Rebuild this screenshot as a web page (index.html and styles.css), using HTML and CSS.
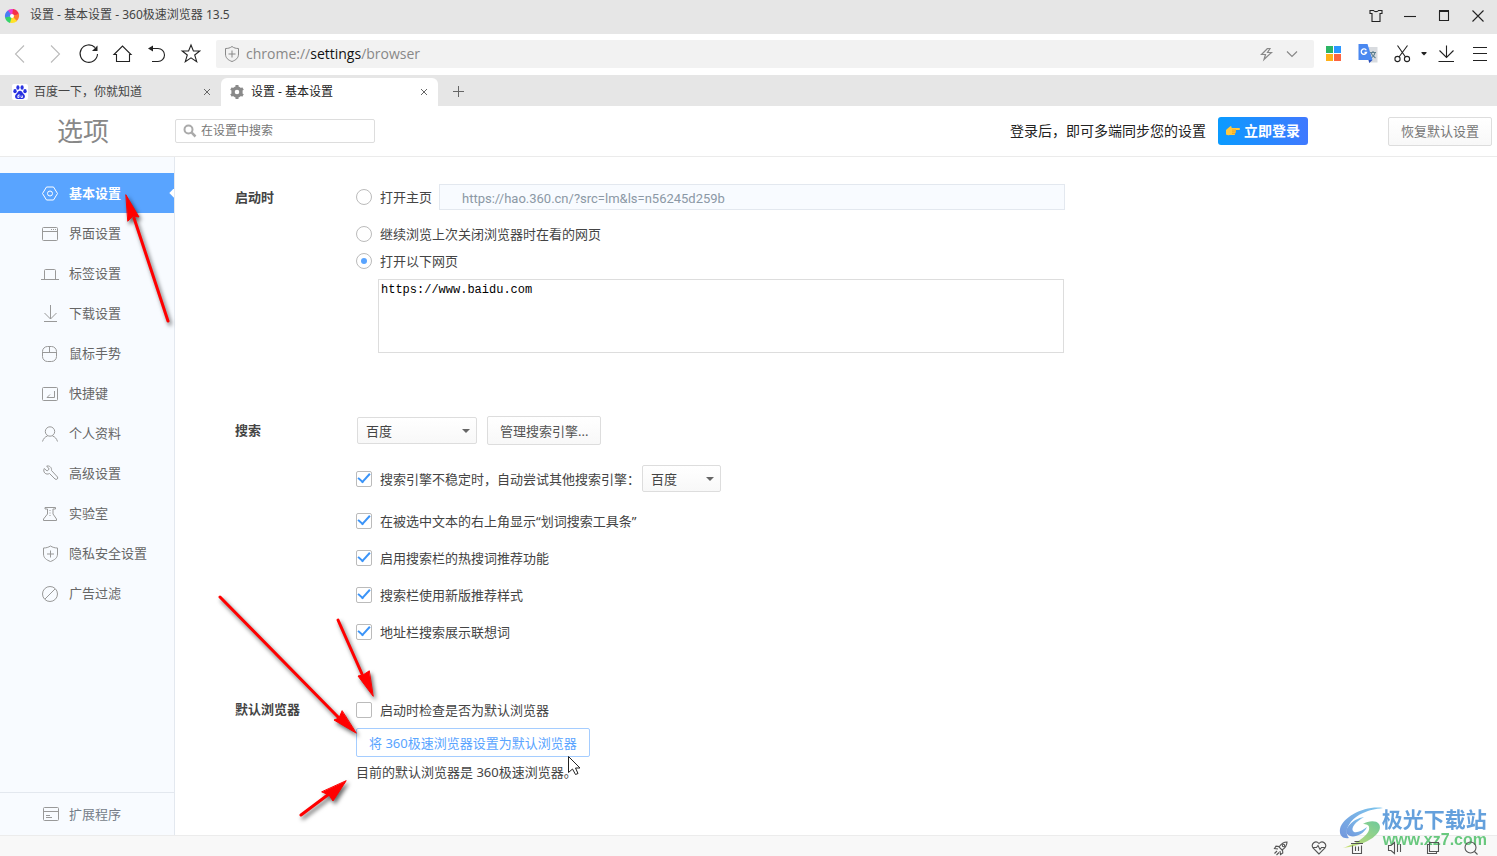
FILE: index.html
```html
<!DOCTYPE html>
<html lang="zh-CN">
<head>
<meta charset="utf-8">
<title>设置 - 基本设置</title>
<link rel="stylesheet" href="styles.css">
</head>
<body>
<div class="window">
  <header class="titlebar">
    <svg class="app-logo" viewBox="0 0 16 16" width="16" height="16">
      <path d="M8 8L3 3.500C5 1 8 .5 10 1.500z" fill="#e83fd0"/>
      <path d="M8 8L9 1c3 .3 5.500 2.500 6 5.500z" fill="#f5304a"/>
      <path d="M8 8l7-2c.5 3-.5 5.500-3 7.500z" fill="#ff7a2e"/>
      <path d="M8 8l5 5c-2 2-5 2.500-8 1.500z" fill="#ffe227"/>
      <path d="M8 8l-2 7C3 14 1 11.500 1 8.500z" fill="#35d36b"/>
      <path d="M8 8L1 9.500C.5 6.500 1.500 4 4 2.500z" fill="#4a7df5"/>
      <circle cx="8" cy="8" r="2" fill="#fff"/>
    </svg>
    <span class="window-title">设置 - 基本设置 - 360极速浏览器 13.5</span>
    <div class="window-controls">
      <button class="icon-btn" aria-label="皮肤"><svg width="16" height="16" viewBox="0 0 16 16"><path d="M2 2.500h3.500c1 1.500 4 1.500 5 0H14v3h-2v8H4v-8H2z"/></svg></button>
      <button class="icon-btn" aria-label="最小化"><svg width="16" height="16" viewBox="0 0 16 16"><path d="M2 8.500h12"/></svg></button>
      <button class="icon-btn" aria-label="最大化"><svg width="16" height="16" viewBox="0 0 16 16"><path d="M3.500 3v9.500h9V3" /><path d="M3 3h10" stroke-width="2"/></svg></button>
      <button class="icon-btn" aria-label="关闭"><svg width="16" height="16" viewBox="0 0 16 16"><path d="M2.500 2.500l11 11M13.500 2.500l-11 11"/></svg></button>
    </div>
  </header>

  <div class="toolbar">
    <button class="icon-btn faint" aria-label="后退"><svg width="22" height="22" viewBox="0 0 22 22"><path d="M15 2.500L6.500 11l8.500 8.500"/></svg></button>
    <button class="icon-btn faint" aria-label="前进"><svg width="22" height="22" viewBox="0 0 22 22"><path d="M8 2.500l8.500 8.500L8 19.500"/></svg></button>
    <button class="icon-btn" aria-label="刷新"><svg width="22" height="22" viewBox="0 0 22 22"><path d="M20.500 11a8.700 8.700 0 1 1-2.500-6.500"/><path d="M20.500 2.500V8H15z" fill="#222" stroke="none"/></svg></button>
    <button class="icon-btn" aria-label="主页"><svg width="22" height="22" viewBox="0 0 22 22"><path d="M3 11.500L11.500 3l8.500 8.500h-1.500v7h-13v-7z"/></svg></button>
    <button class="icon-btn" aria-label="恢复"><svg width="22" height="22" viewBox="0 0 22 22"><path d="M5 5.500h8a6.500 6.500 0 0 1 0 13H7"/><path d="M3 5.500l5-3v6z" fill="#222" stroke="none"/></svg></button>
    <button class="icon-btn" aria-label="收藏"><svg width="22" height="22" viewBox="0 0 22 22"><path d="M12 2l2.400 6h6.400l-5.100 4 2 6.700L12 14.800l-5.700 3.900 2-6.700-5.100-4h6.400z"/></svg></button>
    <div class="address">
      <svg class="shield" width="16" height="18" viewBox="0 0 16 18"><path d="M8 1.500c2 1.500 4 2 6.500 2V9c0 4-2.500 6-6.500 7.500C4 15 1.500 13 1.500 9V3.500c2.500 0 4.500-.5 6.500-2zM8 5.500v7M4.500 9h7"/></svg>
      <div class="url" role="textbox" aria-label="地址栏">chrome://<b>settings</b>/browser</div>
      <button class="addr-btn" aria-label="极速模式"><svg width="16" height="16" viewBox="0 0 16 16"><path d="M8.500 2.500L2.500 8.500h4L5 13.500l7.500-7h-4l2.500-4z"/></svg></button>
      <button class="addr-btn" aria-label="展开"><svg width="14" height="14" viewBox="0 0 14 14"><path d="M2 4.500l5 5 5-5"/></svg></button>
    </div>
    <div class="extensions">
      <button class="icon-btn" aria-label="应用"><svg width="16" height="16" viewBox="0 0 16 16"><path fill="#2cb564" stroke="none" d="M0 0h7v7H0z"/><path fill="#2b97ff" stroke="none" d="M8 0h7v7H8z"/><path fill="#ffb119" stroke="none" d="M0 8h7v7H0z"/><path fill="#fd6440" stroke="none" d="M8 8h7v7H8z"/></svg></button>
      <button class="icon-btn" aria-label="翻译"><svg width="20" height="20" viewBox="0 0 20 20"><path d="M8 3h11.500v15.500H11z" fill="#d8dbdf" stroke="none"/><path d="M12 8.500h6M15 7v1.500M13 8.500c.5 2.500 2.500 4 4.500 5.500M17 8.500c-.5 2.500-2 4.500-4 5.500" stroke="#5d7f8f" fill="none"/><path d="M.5 0H9.500l5 16H.5z" fill="#4a88f0" stroke="none"/><path d="M10.500 16h4l-3.200 3z" fill="#2a50bd" stroke="none"/><path d="M8.300 6.300A2.700 2.700 0 1 0 8.500 8.500H6.500" stroke="#fff" stroke-width="1.300" fill="none"/></svg></button>
      <button class="icon-btn" aria-label="截图"><svg width="18" height="20" viewBox="0 0 18 20"><path d="M4.500 1.500l8 11.500M14.500 1.500L6 13"/><circle cx="4.500" cy="15" r="2.600"/><circle cx="14" cy="15" r="2.600"/></svg></button>
      <button class="caret-btn" aria-label="截图选项"><svg width="6" height="4" viewBox="0 0 6 4"><path d="M.5 0h5v1L3 3.500.5 1z" fill="#222" stroke="none"/></svg></button>
      <button class="icon-btn" aria-label="下载"><svg width="18" height="20" viewBox="0 0 18 20"><path d="M9.500 1.500v12M2.500 6.500l7 7 7-7M1.500 17.500h15.500"/></svg></button>
      <button class="icon-btn" aria-label="菜单"><svg width="18" height="20" viewBox="0 0 18 20"><path d="M2 3.500h14M2 9.500h14M2 16.500h14"/></svg></button>
    </div>
  </div>

  <div class="tabstrip">
    <div class="tab">
      <svg width="16" height="16" viewBox="0 0 16 16"><rect width="16" height="16" rx="2" fill="#fff"/><g fill="#2932e1"><ellipse cx="3" cy="7.200" rx="1.700" ry="2.100"/><ellipse cx="5.900" cy="3.500" rx="1.600" ry="2.200"/><ellipse cx="10.100" cy="3.500" rx="1.600" ry="2.200"/><ellipse cx="13" cy="7.200" rx="1.700" ry="2.100"/><path d="M8 6.800c2 0 2.500 2.200 4 3.500 1.800 1.800.8 4.700-1.500 4.700H5.500c-2.300 0-3.300-2.900-1.500-4.700C5.500 9 6 6.800 8 6.800z"/></g><path d="M7 10v3.500H5.800v-2H7M9 11.500v2h1.500v-2" fill="none" stroke="#fff" stroke-width=".8"/></svg>
      <span class="tab-name">百度一下，你就知道</span>
      <button class="tab-close" aria-label="关闭标签"><svg width="8" height="8" viewBox="0 0 8 8"><path d="M1 1l6 6M7 1L1 7"/></svg></button>
    </div>
    <div class="tab active">
      <svg width="16" height="16" viewBox="0 0 16 16"><circle cx="8" cy="8" r="4" fill="none" stroke="#8a8a8a" stroke-width="3.400"/><path d="M8 1v3M8 12v3M2 4.500L4.500 6M11.500 10l2.500 1.500M2 11.500L4.500 10M11.500 6L14 4.500" stroke="#8a8a8a" stroke-width="3"/></svg>
      <span class="tab-name">设置 - 基本设置</span>
      <button class="tab-close" aria-label="关闭标签"><svg width="8" height="8" viewBox="0 0 8 8"><path d="M1 1l6 6M7 1L1 7"/></svg></button>
    </div>
    <button class="new-tab" aria-label="新标签"><svg width="12" height="12" viewBox="0 0 12 12"><path d="M6.500 1v11M1 6.500h11"/></svg></button>
  </div>

  <div class="page-head">
    <h1 class="page-title">选项</h1>
    <label class="search">
      <svg width="14" height="14" viewBox="0 0 14 14"><circle cx="5.500" cy="5.500" r="4"/><path d="M8.700 8.700L12.500 12.500" stroke-width="2.500"/></svg>
      <input class="search-input" type="text" placeholder="在设置中搜索" aria-label="在设置中搜索">
    </label>
    <span class="login-tip">登录后，即可多端同步您的设置</span>
    <button class="login-btn">
      <svg width="14" height="10" viewBox="0 0 14 10"><path d="M0 4c1.500-1.500 3-2.500 4-3.500C5 0 6 .8 5.500 2H13c1.300 0 1.300 2 0 2H9.500c.8.500.8 1.500 0 1.800.5.700.2 1.500-.5 1.700.3.800-.3 1.500-1 1.500H3.500C2 9.500 1 9 0 8.500z" fill="#ffc83d"/><path d="M6 4h4M6 5.800h3.500M6 7.500h3" stroke="#e08f1b" stroke-width=".6"/></svg>
      立即登录</button>
    <button class="btn restore">恢复默认设置</button>
  </div>

  <div class="body">
    <aside class="sidebar">
      <nav class="nav">
        <a class="nav-item current" href="#basic"><svg width="18" height="18" viewBox="0 0 18 18"><path d="M5.500 3h7l4 6.500-4 6.500h-7l-4-6.500z"/><circle cx="9" cy="9.500" r="2.500"/></svg>基本设置</a>
        <a class="nav-item" href="#ui"><svg width="18" height="18" viewBox="0 0 18 18"><rect x="1.500" y="3.500" width="15" height="13" rx="1"/><path d="M1.500 7.500h15M10 5.500h1M12 5.500h1M14 5.500h1"/></svg>界面设置</a>
        <a class="nav-item" href="#tabs"><svg width="18" height="18" viewBox="0 0 18 18"><path d="M0 15.500h18M3.500 15.500v-9q0-1 1-1h9q1 0 1 1v9"/></svg>标签设置</a>
        <a class="nav-item" href="#download"><svg width="18" height="18" viewBox="0 0 18 18"><path d="M9.500 1v14M3.500 9l6 6 6-6M3 17.500h13"/></svg>下载设置</a>
        <a class="nav-item" href="#mouse"><svg width="18" height="18" viewBox="0 0 18 18"><rect x="1.500" y="2.500" width="14" height="15" rx="5"/><path d="M1.500 8.500h14M8.500 2.500v6"/></svg>鼠标手势</a>
        <a class="nav-item" href="#keys"><svg width="18" height="18" viewBox="0 0 18 18"><rect x="1.500" y="3.500" width="15" height="13" rx="1"/><path d="M13.500 7v6.500h-7M9 10.500l-3 3h3"/></svg>快捷键</a>
        <a class="nav-item" href="#profile"><svg width="18" height="18" viewBox="0 0 18 18"><circle cx="9" cy="7.500" r="4.700"/><path d="M1.500 17.500c1-3 2.500-4.700 5-5.500M11.500 12c2.500.8 4 2.500 5 5.500"/></svg>个人资料</a>
        <a class="nav-item" href="#advanced"><svg width="18" height="18" viewBox="0 0 18 18"><path d="M3.200 4.500l3 2.500 2-2-2.500-3c2.500-.6 5.300 1.300 4.800 4.500l6 6.500c1 1.500-1 3.300-2.500 2L8.500 9.500C5 11.500 1.500 8 3.200 4.500z"/></svg>高级设置</a>
        <a class="nav-item" href="#lab"><svg width="18" height="18" viewBox="0 0 18 18"><path d="M4 3.500h10.500v1.500h-2.500v5l3.500 5v1.500h-13V15L6.500 10V5H4zM9 6v1M9 8.500v1M9 11v1"/></svg>实验室</a>
        <a class="nav-item" href="#privacy"><svg width="18" height="18" viewBox="0 0 18 18"><path d="M9.500 2c2 1.300 4.500 2 7 2v6c0 4-3 6-7 7.500-4-1.500-7-3.500-7-7.500V4c2.500 0 5-.7 7-2zM9.500 6.500v7M6 10h7"/></svg>隐私安全设置</a>
        <a class="nav-item" href="#adblock"><svg width="18" height="18" viewBox="0 0 18 18"><circle cx="9" cy="10" r="7.500"/><path d="M4 15L14 5"/></svg>广告过滤</a>
      </nav>
      <a class="nav-item addons" href="#extensions"><svg width="18" height="18" viewBox="0 0 18 18"><rect x="2.500" y="2.500" width="15" height="13" rx="1"/><path d="M2.500 6.500h15M5 10.500h4M5 12.500h6"/></svg>扩展程序</a>
    </aside>

    <main class="content">
      <section class="section">
        <h2 class="label">启动时</h2>
        <div class="fields">
          <div class="row home">
            <label class="option"><input class="radio" type="radio" name="start">打开主页</label>
            <input class="home-url" type="text" value="https://hao.360.cn/?src=lm&amp;ls=n56245d259b" aria-label="主页地址">
          </div>
          <label class="option compact"><input class="radio" type="radio" name="start">继续浏览上次关闭浏览器时在看的网页</label>
          <label class="option compact"><input class="radio" type="radio" name="start" checked>打开以下网页</label>
          <textarea class="pages" aria-label="网页列表" spellcheck="false">https://www.baidu.com</textarea>
        </div>
      </section>

      <section class="section search-section">
        <h2 class="label">搜索</h2>
        <div class="fields">
          <div class="row engines">
            <span class="select"><select class="select-box" aria-label="搜索引擎"><option>百度</option></select></span>
            <button class="btn">管理搜索引擎...</button>
          </div>
          <div class="row fallback">
            <label class="option"><input class="check" type="checkbox" checked>搜索引擎不稳定时，自动尝试其他搜索引擎：</label>
            <span class="select small"><select class="select-box" aria-label="备用搜索引擎"><option>百度</option></select></span>
          </div>
          <label class="option roomy"><input class="check" type="checkbox" checked>在被选中文本的右上角显示“划词搜索工具条”</label>
          <label class="option roomy"><input class="check" type="checkbox" checked>启用搜索栏的热搜词推荐功能</label>
          <label class="option roomy"><input class="check" type="checkbox" checked>搜索栏使用新版推荐样式</label>
          <label class="option roomy"><input class="check" type="checkbox" checked>地址栏搜索展示联想词</label>
        </div>
      </section>

      <section class="section default-section">
        <h2 class="label">默认浏览器</h2>
        <div class="fields">
          <label class="option roomy"><input class="check" type="checkbox">启动时检查是否为默认浏览器</label>
          <button class="btn primary">将 360极速浏览器设置为默认浏览器</button>
          <p class="note">目前的默认浏览器是 360极速浏览器。</p>
        </div>
      </section>
    </main>
  </div>

  <footer class="statusbar">
    <button class="status-btn" aria-label="加速"><svg width="16" height="16" viewBox="0 0 16 16"><path d="M14 2c-4 0-6 2-8 5l3 3c3-2 5-4 5-8zM6.500 6.500L3 6.200 1.500 8.500 5 9M9.500 9.500l.3 3.500-2.300 1.500L7 11M4 11l-2.500 2.500M6 12.500L3.500 15"/><circle cx="10.500" cy="5.500" r="1.200"/></svg></button>
    <button class="status-btn" aria-label="医生"><svg width="16" height="16" viewBox="0 0 16 16"><path d="M8 14L2 8C-.5 4 4.500-.5 8 3.500 11.500-.5 16.500 4 14 8zM1.500 7.500h4l1.500-2 2 4 1.500-2h4"/></svg></button>
    <button class="status-btn" aria-label="清理"><svg width="16" height="16" viewBox="0 0 16 16"><path d="M2 3.500h12M5.500 1.500h5M3.500 5.500v8h9v-8M6.500 6.500v4.500M9.500 6.500v4.500"/></svg></button>
    <button class="status-btn" aria-label="声音"><svg width="16" height="16" viewBox="0 0 16 16"><path d="M1.500 5.500H4l3.500-3v11l-3.500-3H1.500zM10.500 4v8M13.500 4v8"/></svg></button>
    <button class="status-btn" aria-label="窗口"><svg width="16" height="16" viewBox="0 0 16 16"><path d="M4.500 2.500h9v9h-9zM4.500 4.500h-2v9h9v-2"/></svg></button>
    <button class="status-btn" aria-label="缩放"><svg width="16" height="16" viewBox="0 0 16 16"><circle cx="7.500" cy="7.500" r="5.500"/><path d="M11.500 11.500l3 3"/></svg></button>
  </footer>

  <div class="brand">
    <svg width="46" height="42" viewBox="0 0 46 42">
      <defs>
        <linearGradient id="blue" x1="0" y1="1" x2="1" y2="0"><stop offset="0" stop-color="#5b86d8"/><stop offset="1" stop-color="#68bdea"/></linearGradient>
        <linearGradient id="green" x1="0" y1="1" x2="1" y2="0"><stop offset="0" stop-color="#c6dc5a"/><stop offset="1" stop-color="#55c08a"/></linearGradient>
      </defs>
      <path d="M44 1C27-2 4 9 1 22c-1 7 3 10 9 9C4 25 10 12 24 6c7-3 12-4 20-5z" fill="url(#blue)"/>
      <path d="M25 10C13 12 5 22 8 27c4 5 16 2 20-7-5 4-12 7-14 4s2-9 11-14z" fill="url(#blue)"/>
      <path d="M19 20c3-4 9-2 5 2-2 2-6 2-5-2z" fill="#fff"/>
      <path d="M24 17c5-3 13-4 16 0 5 8-10 21-36 24 12-4 28-13 26-21 0-2-3-3-6-3z" fill="url(#green)"/>
    </svg>
    <div class="brand-text"><span class="brand-name">极光下载站</span><span class="brand-site">www.xz7.com</span></div>
  </div>

  <svg class="marks" width="620" height="830" viewBox="0 0 620 830">
    <g class="arrows">
      <path d="M168 321L134 218"/><path class="tip" d="M126 195l13 22-6-1-5 5z"/>
      <path d="M220 597L338 717"/><path class="tip" d="M356 733l-22-13 5-2 3-7z"/>
      <path d="M338 620L362 674"/><path class="tip" d="M373 696l-15-20 5-1 6-4z"/>
      <path d="M301 815L329 794"/><path class="tip" d="M346 781l-13 20-4-6-7-3z"/>
    </g>
    <path class="pointer" d="M568.500 756.500v16l4-3.500 3 5.500 2.500-1-2.500-5.500h4.500z"/>
  </svg>
</div>
</body>
</html>
```

FILE: styles.css
```css
* { box-sizing: border-box; }

body {
  margin: 0;
  font: 13px/20px "Noto Sans", "Noto Sans CJK SC", sans-serif;
  color: #444;
  background: #fff;
}

button, input, select, textarea { font: inherit; color: inherit; margin: 0; }
button { padding: 0; border: 0; background: none; }
svg { flex: none; display: block; }

.window {
  position: relative;
  display: flex;
  flex-direction: column;
  height: 100vh;
  overflow: hidden;
}

/* title bar */
.titlebar {
  display: flex;
  align-items: center;
  height: 34px;
  padding: 0 2px 2px 4px;
  background: #e6e6e6;
}
.window-title { margin: 0 auto 2px 10px; font-size: 12px; color: #444; }
.window-controls { display: flex; }
.icon-btn {
  display: flex;
  align-items: center;
  justify-content: center;
  width: 34px;
  height: 32px;
}
.icon-btn svg { fill: none; stroke: #222; stroke-width: 1.1; }
.icon-btn.faint svg { stroke: #bbb; }

/* toolbar */
.toolbar {
  display: flex;
  align-items: center;
  height: 41px;
  padding: 0 0 1px 3px;
}
.address {
  display: flex;
  align-items: center;
  flex: 1;
  height: 28px;
  margin: 0 3px 0 9px;
  padding: 0 10px 0 8px;
  border-radius: 2px;
  background: #f2f2f2;
}
.shield { fill: none; stroke: #888; }
.url {
  flex: 1;
  margin-left: 6px;
  font-family: "Open Sans", "Noto Sans", sans-serif;
  font-size: 14px;
  color: #888;
}
.url b { font-weight: 400; color: #111; }
.addr-btn { display: flex; justify-content: center; width: 25px; }
.addr-btn svg { fill: none; stroke: #888; stroke-width: 1.2; }
.extensions { display: flex; align-items: center; }
.caret-btn { display: flex; justify-content: center; width: 10px; }

/* tabs */
.tabstrip {
  display: flex;
  align-items: flex-end;
  height: 31px;
  background: #e6e6e6;
}
.tab {
  display: flex;
  align-items: center;
  width: 221px;
  height: 28px;
  padding: 0 10px 1px 12px;
  font-size: 12px;
}
.tab.active {
  width: 217px;
  padding-left: 8px;
  border-radius: 6px 6px 0 0;
  background: #fff;
  color: #222;
}
.tab-name { flex: 1; margin-left: 6px; }
.tab-close svg, .new-tab svg { fill: none; stroke: #666; }
.new-tab { margin: 0 0 9px 14px; }

/* page header */
.page-head {
  display: flex;
  align-items: center;
  height: 51px;
  padding: 0 5px 0 57px;
  border-bottom: 1px solid #ebebeb;
}
.page-title { width: 118px; margin: 0; font-size: 26px; line-height: 40px; font-weight: 400; color: #888; }
.search {
  display: flex;
  align-items: center;
  width: 200px;
  height: 24px;
  margin-right: auto;
  padding: 0 7px;
  border: 1px solid #ddd;
  border-radius: 2px;
}
.search svg { fill: none; stroke: #aaa; stroke-width: 2; }
.search-input { flex: 1; min-width: 0; margin-left: 4px; padding: 0; border: 0; outline: 0; font-size: 12px; }
.search-input::placeholder { color: #777; }
.login-tip { font-size: 14px; color: #222; }
.login-btn {
  display: flex;
  align-items: center;
  gap: 4px;
  height: 28px;
  margin: 0 80px 0 12px;
  padding: 0 8px;
  border-radius: 3px;
  background: linear-gradient(90deg, #0a9bff, #4079ff);
  font-size: 14px;
  font-weight: 700;
  color: #fff;
}
.btn {
  height: 29px;
  padding: 0 12px;
  border: 1px solid #ddd;
  border-radius: 2px;
  background: linear-gradient(#fff, #f8f8f8);
  color: #555;
}
.btn.restore { color: #777; }
.btn.primary { border-color: #a5cdff; background: #fff; color: #59a4ff; }

/* sidebar */
.body { display: flex; flex: 1; min-height: 0; }
.sidebar {
  display: flex;
  flex-direction: column;
  justify-content: space-between;
  width: 175px;
  padding-top: 16px;
  border-right: 1px solid #e3e8ef;
  background: #f8fbff;
}
.nav-item {
  position: relative;
  display: flex;
  align-items: center;
  gap: 10px;
  height: 40px;
  padding-left: 41px;
  color: #666;
  text-decoration: none;
}
.nav-item svg { fill: none; stroke: #999; }
.nav-item.current { background: #59a4ff; color: #fff; font-weight: 700; overflow: hidden; }
.nav-item.current svg { stroke: #fff; }
.nav-item.current::after {
  content: "";
  position: absolute;
  right: -5px;
  top: 16px;
  width: 8px;
  height: 8px;
  background: #fff;
  transform: rotate(45deg);
}
.nav-item.addons { height: 43px; border-top: 1px solid #e3e8ef; color: #757d88; }

/* settings */
.content { flex: 1; padding: 27px 60px 0; }
.section { display: grid; grid-template-columns: 121px 1fr; max-width: 830px; }
.search-section { margin-top: 63px; }
.default-section { margin-top: 41px; }
.label { margin: 0; font-size: 13px; line-height: 26px; font-weight: 700; }
.search-section .label { line-height: 29px; }
.default-section .label { line-height: 37px; }
.fields { display: flex; flex-direction: column; align-items: flex-start; }
.row { display: flex; align-items: center; }
.option { display: flex; align-items: center; gap: 8px; }
.option.compact { height: 27px; }
.option.roomy { height: 37px; }
.home { align-self: stretch; gap: 7px; margin-bottom: 10px; }
.home-url {
  flex: 1;
  height: 26px;
  padding: 2px 22px 0;
  border: 1px solid #e3e8ef;
  background: #f8fbff;
  font-family: Roboto, "Noto Sans", sans-serif;
  color: #8b98a5;
}
.pages {
  align-self: stretch;
  height: 74px;
  margin: 5px 1px 0 22px;
  padding: 1px 2px;
  border: 1px solid #ddd;
  resize: none;
  font: 12px/18px "Liberation Mono", monospace;
  color: #000;
}
.engines { gap: 10px; padding-left: 1px; }
.fallback { margin: 20px 0 10px; gap: 2px; }

.radio, .check {
  appearance: none;
  display: grid;
  place-items: center;
  width: 16px;
  height: 16px;
  border: 1px solid #bbb;
  background: #fff;
}
.radio { border-radius: 50%; }
.radio:checked::after { content: ""; width: 6px; height: 6px; border-radius: 50%; background: #59a4ff; }
.check { border-radius: 2px; }
.check:checked::after {
  content: "";
  width: 10px;
  height: 5px;
  margin-bottom: 4px;
  border: solid #3b94f8;
  border-width: 0 0 2px 2px;
  transform: rotate(-48deg);
}

.select { position: relative; width: 120px; }
.select.small { width: 79px; }
.select-box {
  appearance: none;
  display: block;
  width: 100%;
  height: 27px;
  padding: 0 8px;
  border: 1px solid #ddd;
  border-radius: 2px;
  background: linear-gradient(#fff, #f8f8f8);
}
.select::after {
  content: "";
  position: absolute;
  right: 7px;
  top: 12px;
  border: 4px solid transparent;
  border-top-color: #666;
  border-bottom: 0;
}
.note { margin: 0; line-height: 30px; }

/* status bar */
.statusbar {
  display: flex;
  justify-content: flex-end;
  height: 21px;
  padding-right: 7px;
  border-top: 1px solid #ececec;
  background: #f8f8f8;
}
.status-btn { position: relative; z-index: 1; display: flex; justify-content: center; width: 38px; padding-top: 4px; }
.status-btn svg { fill: none; stroke: #555; stroke-width: 1.1; }

/* overlays */
.brand { position: absolute; right: 10px; bottom: 7px; display: flex; opacity: .85; }
.brand svg { margin-right: -3px; }
.brand-text { display: flex; flex-direction: column; font-weight: 700; }
.brand-name { font-size: 21px; line-height: 24px; color: #4a90d6; }
.brand-site { padding-left: 1px; font: 700 16px/18px "Liberation Sans", sans-serif; color: #4fc069; }
.marks { position: absolute; left: 0; top: 0; pointer-events: none; }
.arrows { fill: none; stroke: #f00; stroke-width: 3; stroke-linecap: round; filter: drop-shadow(2px 3px 2px rgba(0, 0, 0, .6)); }
.arrows .tip { fill: #f00; stroke-width: 1; }
.pointer { fill: #fff; stroke: #222; }
```
